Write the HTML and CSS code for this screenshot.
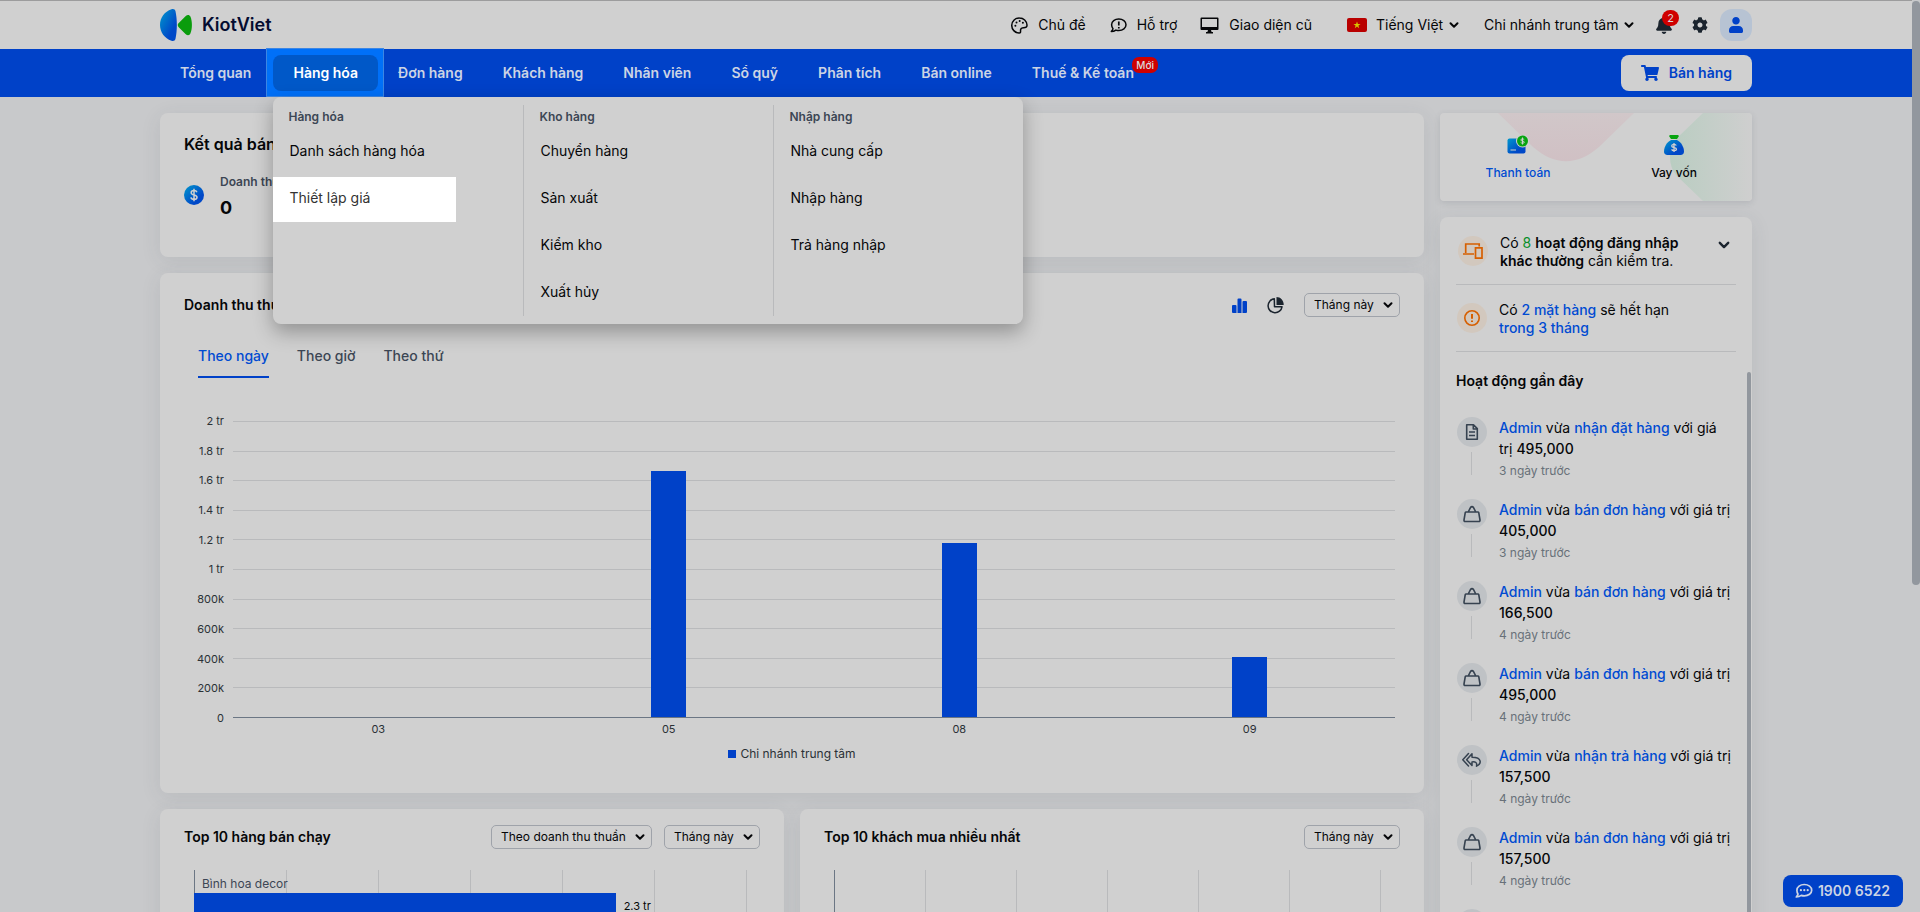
FILE: index.html
```html
<!DOCTYPE html>
<html lang="vi">
<head>
    <meta charset="UTF-8">
    <meta name="viewport" content="width=device-width, initial-scale=1.0">
    <title>KiotViet</title>
    <link rel="stylesheet" href="styles.css">
</head>
<body>
    <svg class="sprite" aria-hidden="true">
        <symbol id="i-chevron" viewBox="0 0 10 10"><path d="M1.5 3.2 5 6.7 8.500 3.200" fill="none" stroke="currentColor" stroke-width="2" stroke-linecap="round" stroke-linejoin="round"/></symbol>
        <symbol id="i-bag" viewBox="0 0 18 18"><path d="M3.200 7h11.600q.8 0 1 .8l1.200 7.200q.2 1.500-1.300 1.500H2.300Q.8 16.500 1 15l1.200-7.200q.2-.8 1-.8zM5.200 7 7.600 2.400q1.400-1.600 2.800 0L12.800 7" fill="none" stroke="currentColor" stroke-width="1.600" stroke-linejoin="round"/></symbol>
        <symbol id="i-doc" viewBox="0 0 18 18"><path d="M4.500 1.800h6l3.800 3.800v10.600H3.700V1.800zM10.300 2v4h4M6 9h6M6 12.500h6" fill="none" stroke="currentColor" stroke-width="1.600" stroke-linejoin="round"/></symbol>
        <symbol id="i-reply" viewBox="0 0 20 16"><path d="M6.500 1.500.8 7.800l5.700 6.200M10 1.800 4.600 7.800l5.400 5.700v-3.600c3.500-.4 5.300.6 4.500 4.300 5-2.500 6-8.900-4.500-9z" fill="none" stroke="currentColor" stroke-width="1.500" stroke-linejoin="round" stroke-linecap="round"/></symbol>
    </svg>

    <div class="app">
        <header class="topbar">
            <div class="container topbar-inner">
                <a class="logo" href="#">
                    <svg width="32" height="32" viewBox="0 0 32 32" aria-hidden="true">
                        <defs><linearGradient id="g-blue" x1="0" x2="1" y1="0" y2="1"><stop offset="0" stop-color="#0098cc"/><stop offset=".7" stop-color="#0048c8"/></linearGradient></defs>
                        <path d="M11.500.3C4.500 2.500 0 9 0 16s4.500 13.500 11.500 15.700c2 .6 3.500 0 4-2 1.800-8 1.800-19.400 0-27.400-.5-2-2-2.600-4-2z" fill="url(#g-blue)"/>
                        <path d="M18.500 14.200 25.500 7.200c2-1.900 4-1.600 4.900.4 2 4.500 2 12.500 0 16.900-.9 2-2.900 2.300-4.900.4l-7-7c-1-1-1-2.700 0-3.700z" fill="#0a9c0c"/>
                    </svg>
                    <span>KiotViet</span>
                </a>
                <div class="tools">
                    <a class="tool tool-theme" href="#">
                        <svg width="17" height="17" viewBox="0 0 17 17"><path d="M8.500 1A7.500 7.500 0 0 0 8 16c2.300.1 1.300-2.100 1.600-3.400.3-1.500 1.600-1.900 3-1.900 2.200 0 3.500-.7 3.400-2.700C15.700 4 12.600 1 8.500 1z" fill="none" stroke="currentColor" stroke-width="1.500"/><g fill="currentColor"><circle cx="4.400" cy="8.700" r="1"/><circle cx="5.500" cy="5.400" r="1"/><circle cx="8.700" cy="4.100" r="1"/><circle cx="11.900" cy="5.800" r="1"/></g></svg>
                        Chủ đề
                    </a>
                    <a class="tool tool-help" href="#">
                        <svg width="17" height="17" viewBox="0 0 17 17"><path d="M8.800 2c4 0 7.200 2.500 7.200 5.800s-3.200 5.800-7.200 5.800c-1 0-2-.2-2.900-.5-1.200.9-2.800 1.500-4.600 1.500.9-.9 1.500-1.900 1.700-3C2.100 10.500 1.600 9.200 1.600 7.800 1.600 4.500 4.800 2 8.800 2z" fill="none" stroke="currentColor" stroke-width="1.500" stroke-linejoin="round"/><path d="M8.800 4.400v4.200M8.800 10v1.500" stroke="currentColor" stroke-width="1.700"/></svg>
                        Hỗ trợ
                    </a>
                    <a class="tool tool-old" href="#">
                        <svg width="19" height="17" viewBox="0 0 19 17"><path d="M1.500.5h16a1 1 0 0 1 1 1v10.600a1 1 0 0 1-1 1h-16a1 1 0 0 1-1-1V1.500a1 1 0 0 1 1-1zM2 2v8h15V2zM8 13h3l.6 2H13v1.500H6V15h1.400z" fill="currentColor" fill-rule="evenodd"/></svg>
                        Giao diện cũ
                    </a>
                    <div class="tool tool-lang">
                        <svg width="20" height="14" viewBox="0 0 20 14"><rect width="20" height="14" rx="2" fill="#b90000"/><path d="m10 3.400.9 2.600h2.700l-2.200 1.600.8 2.600-2.200-1.600-2.200 1.600.8-2.600L6.400 6h2.700z" fill="#d8c400"/></svg>
                        <span class="pick pick-plain">
                            <select aria-label="Ngôn ngữ"><option>Tiếng Việt</option></select>
                            <svg><use href="#i-chevron"/></svg>
                        </span>
                    </div>
                    <span class="pick pick-plain tool-branch">
                        <select aria-label="Chi nhánh"><option>Chi nhánh trung tâm</option></select>
                        <svg><use href="#i-chevron"/></svg>
                    </span>
                    <button class="icon-btn bell" aria-label="Thông báo">
                        <svg width="16" height="18" viewBox="0 0 448 512"><path fill="currentColor" d="M224 512c35.320 0 63.970-28.650 63.970-64H160.030c0 35.350 28.650 64 63.970 64zm215.390-149.710c-19.320-20.760-55.470-51.990-55.470-154.290 0-77.700-54.480-139.900-127.940-155.160V32c0-17.670-14.320-32-31.980-32s-31.980 14.330-31.980 32v20.840C118.560 68.100 64.080 130.300 64.080 208c0 102.300-36.150 133.530-55.470 154.290-6 6.450-8.660 14.160-8.610 21.710.11 16.400 12.980 32 32.100 32h383.800c19.120 0 32-15.600 32.100-32 .05-7.550-2.610-15.270-8.610-21.710z"/></svg>
                        <span class="count">2</span>
                    </button>
                    <button class="icon-btn gear" aria-label="Thiết lập">
                        <svg width="16" height="16" viewBox="0 0 512 512"><path fill="currentColor" d="M487.400 315.700l-42.600-24.600c4.300-23.200 4.300-47 0-70.200l42.600-24.600c4.900-2.800 7.100-8.600 5.500-14-11.100-35.600-30-67.800-54.700-94.600-3.800-4.100-10-5.100-14.800-2.300L380.800 110c-17.900-15.400-38.500-27.300-60.800-35.100V25.800c0-5.600-3.900-10.500-9.400-11.700-36.700-8.200-74.300-7.800-109.200 0-5.500 1.200-9.400 6.100-9.400 11.700V75c-22.200 7.900-42.800 19.800-60.800 35.100L88.700 85.500c-4.900-2.800-11-1.900-14.800 2.300-24.700 26.700-43.600 58.900-54.700 94.600-1.700 5.400.6 11.200 5.500 14L67.300 221c-4.300 23.200-4.300 47 0 70.200l-42.600 24.600c-4.900 2.800-7.100 8.600-5.500 14 11.100 35.600 30 67.800 54.700 94.600 3.800 4.100 10 5.100 14.800 2.300l42.600-24.600c17.900 15.400 38.500 27.300 60.800 35.100v49.200c0 5.600 3.900 10.500 9.400 11.700 36.700 8.200 74.300 7.800 109.200 0 5.500-1.200 9.400-6.100 9.400-11.700v-49.200c22.200-7.900 42.800-19.800 60.800-35.100l42.600 24.600c4.900 2.800 11 1.900 14.800-2.300 24.700-26.700 43.600-58.900 54.700-94.600 1.500-5.500-.7-11.300-5.600-14.100zM256 336c-44.100 0-80-35.900-80-80s35.900-80 80-80 80 35.900 80 80-35.900 80-80 80z"/></svg>
                    </button>
                    <button class="avatar" aria-label="Tài khoản">
                        <svg width="14" height="16" viewBox="0 0 448 512"><path fill="currentColor" d="M224 240c66 0 120-54 120-120S290 0 224 0 104 54 104 120s54 120 120 120zm90 48H134C60 288 0 348 0 422v42c0 26 22 48 48 48h352c26 0 48-22 48-48v-42c0-74-60-134-134-134z"/></svg>
                    </button>
                </div>
            </div>
        </header>

        <nav class="navbar">
            <div class="container navbar-inner">
                <ul class="nav">
                    <li><a href="#">Tổng quan</a></li>
                    <li class="open">
                        <a href="#">Hàng hóa</a>
                        <div class="mega">
                            <div class="mega-col">
                                <h3>Hàng hóa</h3>
                                <a href="#">Danh sách hàng hóa</a>
                                <a class="spot" href="#">Thiết lập giá</a>
                            </div>
                            <div class="mega-col">
                                <h3>Kho hàng</h3>
                                <a href="#">Chuyển hàng</a>
                                <a href="#">Sản xuất</a>
                                <a href="#">Kiểm kho</a>
                                <a href="#">Xuất hủy</a>
                            </div>
                            <div class="mega-col">
                                <h3>Nhập hàng</h3>
                                <a href="#">Nhà cung cấp</a>
                                <a href="#">Nhập hàng</a>
                                <a href="#">Trả hàng nhập</a>
                            </div>
                        </div>
                    </li>
                    <li><a href="#">Đơn hàng</a></li>
                    <li><a href="#">Khách hàng</a></li>
                    <li><a href="#">Nhân viên</a></li>
                    <li><a href="#">Sổ quỹ</a></li>
                    <li><a href="#">Phân tích</a></li>
                    <li><a href="#">Bán online</a></li>
                    <li><a href="#">Thuế &amp; Kế toán</a><span class="new">Mới</span></li>
                </ul>
                <button class="sell">
                    <svg width="18" height="16" viewBox="0 0 576 512"><path fill="currentColor" d="M528.120 301.319l47.273-208C578.806 78.301 567.391 64 551.990 64H159.208l-9.166-44.810C147.758 8.021 137.930 0 126.529 0H24C10.745 0 0 10.745 0 24v16c0 13.255 10.745 24 24 24h69.883l70.248 343.435C147.325 417.100 136 435.222 136 456c0 30.928 25.072 56 56 56s56-25.072 56-56c0-15.674-6.447-29.835-16.824-40h209.647C430.447 426.165 424 440.326 424 456c0 30.928 25.072 56 56 56s56-25.072 56-56c0-22.172-12.888-41.332-31.579-50.405l5.517-24.276c3.413-15.018-8.002-29.319-23.403-29.319H218.117l-6.545-32h293.145c11.206 0 20.920-7.754 23.403-18.681z"/></svg>
                    Bán hàng
                </button>
            </div>
        </nav>

        <main class="container page">
            <div class="main-col">
                <section class="card result">
                    <h2>Kết quả bán hàng hôm nay</h2>
                    <div class="result-row">
                        <svg width="20" height="20" viewBox="0 0 20 20" aria-hidden="true"><circle cx="10" cy="10" r="10" fill="url(#g-blue)"/><path d="M10 3.800v12.400M12.900 7.300c-.4-1.200-1.500-1.700-2.900-1.700-1.600 0-2.800.7-2.800 2.100 0 3.200 5.800 1.300 5.800 4.500 0 1.500-1.300 2.200-3 2.200-1.600 0-2.800-.7-3.100-2" fill="none" stroke="#d0d0d0" stroke-width="1.500"/></svg>
                        <div>
                            <div class="result-label">Doanh thu</div>
                            <div class="result-value">0</div>
                        </div>
                    </div>
                </section>

                <section class="card revenue">
                    <div class="card-head">
                        <h2>Doanh thu thuần</h2>
                        <div class="card-tools">
                            <button class="icon-btn blue" aria-label="Biểu đồ cột"><svg width="15" height="15" viewBox="0 0 15 15"><path d="M0 8q0-1 1-1h2.500q1 0 1 1v7H1q-1 0-1-1zM5.500 1.500q0-1 1-1h2q1 0 1 1V15h-4zM10.500 4q0-1 1-1H14q1 0 1 1v10q0 1-1 1h-3.500z" fill="currentColor"/></svg></button>
                            <button class="icon-btn" aria-label="Biểu đồ tròn"><svg width="17" height="17" viewBox="0 0 17 17"><path d="M9.500 0C13.500 0 16.700 3.300 16.700 8H9.500z" fill="currentColor"/><path d="M7.300 1.800A7 7 0 1 0 15 9.800H7.500z" fill="none" stroke="currentColor" stroke-width="1.500" stroke-linejoin="round"/></svg></button>
                            <span class="pick">
                                <select aria-label="Thời gian doanh thu"><option>Tháng này</option></select>
                                <svg><use href="#i-chevron"/></svg>
                            </span>
                        </div>
                    </div>
                    <div class="tabs" role="tablist">
                        <button class="active" role="tab" aria-selected="true">Theo ngày</button>
                        <button role="tab">Theo giờ</button>
                        <button role="tab">Theo thứ</button>
                    </div>
                    <div class="chart">
                        <div class="y-axis">
                            <span>2 tr</span><span>1.8 tr</span><span>1.6 tr</span><span>1.4 tr</span><span>1.2 tr</span><span>1 tr</span><span>800k</span><span>600k</span><span>400k</span><span>200k</span><span>0</span>
                        </div>
                        <div class="plot">
                            <div class="lines"><i></i><i></i><i></i><i></i><i></i><i></i><i></i><i></i><i></i><i></i></div>
                            <div class="bars">
                                <div></div>
                                <div><b style="height: 83.1%"></b></div>
                                <div><b style="height: 58.8%"></b></div>
                                <div><b style="height: 20.3%"></b></div>
                            </div>
                        </div>
                        <div class="x-axis"><span>03</span><span>05</span><span>08</span><span>09</span></div>
                    </div>
                    <div class="legend">Chi nhánh trung tâm</div>
                </section>

                <div class="split">
                    <section class="card top">
                        <div class="card-head">
                            <h2>Top 10 hàng bán chạy</h2>
                            <div class="card-tools tight">
                                <span class="pick">
                                    <select aria-label="Xếp theo"><option>Theo doanh thu thuần</option></select>
                                    <svg><use href="#i-chevron"/></svg>
                                </span>
                                <span class="pick">
                                    <select aria-label="Thời gian hàng bán"><option>Tháng này</option></select>
                                    <svg><use href="#i-chevron"/></svg>
                                </span>
                            </div>
                        </div>
                        <div class="hchart">
                            <div class="cols"><i></i><i></i><i></i><i></i><i></i><i></i><i></i></div>
                            <div class="hbars">
                                <div class="hlabel">Bình hoa decor</div>
                                <div class="hrow"><b style="width: 73.2%"></b><span>2.3 tr</span></div>
                            </div>
                        </div>
                    </section>
                    <section class="card top">
                        <div class="card-head">
                            <h2>Top 10 khách mua nhiều nhất</h2>
                            <div class="card-tools">
                                <span class="pick">
                                    <select aria-label="Thời gian khách mua"><option>Tháng này</option></select>
                                    <svg><use href="#i-chevron"/></svg>
                                </span>
                            </div>
                        </div>
                        <div class="hchart">
                            <div class="cols cols-narrow"><i></i><i></i><i></i><i></i><i></i><i></i><i></i></div>
                        </div>
                    </section>
                </div>
            </div>

            <aside class="side-col">
                <section class="card finance">
                    <svg class="finance-bg" viewBox="0 0 312 88" preserveAspectRatio="none" aria-hidden="true">
                        <defs>
                            <linearGradient id="g-pink" x1="0" x2="0" y1="0" y2="1"><stop offset="0" stop-color="#d1c7c9"/><stop offset="1" stop-color="#d0c0c4"/></linearGradient>
                            <linearGradient id="g-mint"><stop offset="0" stop-color="#b9cdc1"/><stop offset="1" stop-color="#cfcfcf"/></linearGradient>
                        </defs>
                        <path d="M58 0 93 34c22 19 44 19 66 0L194 0z" fill="url(#g-pink)"/>
                        <path d="M263 0 236 26c-8 9-8 27 0 36l27 26h49V0z" fill="url(#g-mint)"/>
                    </svg>
                    <a class="blue" href="#">
                        <svg width="22" height="20" viewBox="0 0 22 20"><path d="M2.500 3.500H17q1.500 0 1.500 1.500v11.500q0 2-2 2h-14q-2 0-2-2v-11q0-2 2-2z" fill="url(#g-blue)"/><circle cx="15.500" cy="6" r="6.500" fill="#d0d0d0"/><circle cx="15.500" cy="6" r="5.500" fill="#08a410"/><path d="M15.500 2.500v7M17.200 4.600c-1-1.200-3.400-.8-3.400.4 0 1.500 3.500.6 3.500 2.200 0 1.200-2.700 1.500-3.600.2" fill="none" stroke="#d0d0d0"/><path d="M3.500 15h5.500" stroke="#d0d0d0"/></svg>
                        Thanh toán
                    </a>
                    <a href="#">
                        <svg width="20" height="20" viewBox="0 0 20 20"><path d="M6 0h8l1 1-2 3H7L5 1z" fill="#08a410"/><path d="M7 5h6c4 2 7 7 7 11.500 0 2.300-1.200 3.500-3.500 3.500h-13C1.200 20 0 18.800 0 16.500 0 12 3 7 7 5z" fill="url(#g-blue)"/><path d="M10 8v9M12.300 10.500c-1-1.800-4.600-1.400-4.600.5 0 2.300 4.800 1 4.800 3.200 0 1.900-3.900 2.100-4.900.2" fill="none" stroke="#d0d0d0" stroke-width="1.300"/></svg>
                        Vay vốn
                    </a>
                </section>

                <section class="card feed">
                    <div class="notice">
                        <span class="dot orange"><svg width="20" height="16" viewBox="0 0 20 16"><path d="M2.700 10V1h13.500v2.500M0 11h11M12.500 4.800h6.500v10.400h-6.500z" fill="none" stroke="currentColor" stroke-width="1.700"/></svg></span>
                        <p>Có <em class="green">8</em> <strong>hoạt động đăng nhập khác thường</strong> cần kiểm tra.</p>
                        <button class="icon-btn more" aria-label="Mở rộng"><svg width="12" height="12"><use href="#i-chevron"/></svg></button>
                    </div>
                    <div class="notice">
                        <span class="dot orange"><svg width="16" height="16" viewBox="0 0 16 16"><circle cx="8" cy="8" r="7.200" fill="none" stroke="currentColor" stroke-width="1.600"/><path d="M8 4v4.800M8 10.400V12" stroke="currentColor" stroke-width="2"/></svg></span>
                        <p>Có <a href="#">2 mặt hàng</a> sẽ hết hạn <a href="#">trong 3 tháng</a></p>
                    </div>
                    <h2>Hoạt động gần đây</h2>
                    <ul class="log">
                        <li>
                            <span class="dot"><svg width="18" height="18"><use href="#i-doc"/></svg></span>
                            <p><a href="#">Admin</a> vừa <a href="#">nhận đặt hàng</a> với giá trị <strong>495,000</strong></p>
                            <time>3 ngày trước</time>
                        </li>
                        <li>
                            <span class="dot"><svg width="18" height="18"><use href="#i-bag"/></svg></span>
                            <p><a href="#">Admin</a> vừa <a href="#">bán đơn hàng</a> với giá trị <strong>405,000</strong></p>
                            <time>3 ngày trước</time>
                        </li>
                        <li>
                            <span class="dot"><svg width="18" height="18"><use href="#i-bag"/></svg></span>
                            <p><a href="#">Admin</a> vừa <a href="#">bán đơn hàng</a> với giá trị <strong>166,500</strong></p>
                            <time>4 ngày trước</time>
                        </li>
                        <li>
                            <span class="dot"><svg width="18" height="18"><use href="#i-bag"/></svg></span>
                            <p><a href="#">Admin</a> vừa <a href="#">bán đơn hàng</a> với giá trị <strong>495,000</strong></p>
                            <time>4 ngày trước</time>
                        </li>
                        <li>
                            <span class="dot"><svg width="20" height="16"><use href="#i-reply"/></svg></span>
                            <p><a href="#">Admin</a> vừa <a href="#">nhận trả hàng</a> với giá trị <strong>157,500</strong></p>
                            <time>4 ngày trước</time>
                        </li>
                        <li>
                            <span class="dot"><svg width="18" height="18"><use href="#i-bag"/></svg></span>
                            <p><a href="#">Admin</a> vừa <a href="#">bán đơn hàng</a> với giá trị <strong>157,500</strong></p>
                            <time>4 ngày trước</time>
                        </li>
                        <li>
                            <span class="dot"><svg width="18" height="18"><use href="#i-bag"/></svg></span>
                        </li>
                    </ul>
                </section>
            </aside>
        </main>
    </div>

    <div class="page-scroll"></div>
    <a class="hotline" href="tel:19006522">
        <svg width="18" height="16" viewBox="0 0 18 16"><path d="M9.300 1.500c4.100 0 7.400 2.500 7.400 5.700s-3.300 5.700-7.400 5.700c-1.100 0-2.100-.2-3-.5-1.200.9-2.900 1.600-5 1.600.9-1 1.500-2 1.700-3C2.300 10 1.900 8.600 1.900 7.200c0-3.200 3.300-5.700 7.400-5.700z" fill="none" stroke="currentColor" stroke-width="1.700" stroke-linejoin="round"/><g fill="currentColor"><circle cx="5.900" cy="7.200" r="1.100"/><circle cx="9.300" cy="7.200" r="1.100"/><circle cx="12.700" cy="7.200" r="1.100"/></g></svg>
        1900 6522
    </a>
</body>
</html>
```
FILE: styles.css
```css
:root {
    --bg: #c8c9cb;
    --card: #d0d0d0;
    --blue: #0041c8;
    --link: #004bd2;
    --text: #050608;
    --muted: #3c4654;
    --line: #b9babc;
    --border: #9fa3aa;
    --thumb: #92979e;
}

* {
    box-sizing: border-box;
}

body {
    margin: 0;
    height: 100vh;
    overflow: hidden;
    background: var(--bg);
    color: var(--text);
    font: 14px/20px Inter, "Noto Sans", sans-serif;
}

h2, h3, p, ul {
    margin: 0;
    padding: 0;
}

ul {
    list-style: none;
}

a {
    color: inherit;
    text-decoration: none;
}

button, select {
    font: inherit;
    color: inherit;
    background: none;
    border: 0;
    padding: 0;
    cursor: pointer;
}

svg {
    display: block;
    flex: none;
}

.sprite {
    position: absolute;
    width: 0;
    height: 0;
}

.app {
    height: 100%;
    margin-right: 8px;
    overflow: hidden;
    border-top: 1px solid #9c9c9d;
}

.container {
    max-width: 1592px;
    margin: 0 auto;
}

/* header */
.topbar {
    background: var(--card);
}

.topbar-inner {
    display: flex;
    align-items: center;
    justify-content: space-between;
    height: 48px;
}

.logo {
    display: flex;
    align-items: center;
    gap: 10px;
    color: #040c30;
    font-size: 18px;
    font-weight: 600;
}

.tools, .tool {
    display: flex;
    align-items: center;
}

.tool {
    gap: 10px;
}

.tool-help {
    margin-left: 24px;
}

.tool-old {
    margin-left: 23px;
}

.tool-lang {
    gap: 9px;
    margin-left: 35px;
}

.tool-branch {
    margin-left: 25px;
}

.icon-btn {
    display: flex;
    color: #1b242e;
}

.bell {
    position: relative;
    margin-left: 22px;
}

.gear {
    margin-left: 20px;
}

.count {
    position: absolute;
    left: 6px;
    top: -6px;
    width: 17px;
    height: 16px;
    border-radius: 8px;
    background: #cf0000;
    color: #d8d8d8;
    font-size: 11px;
    line-height: 16px;
    text-align: center;
}

.avatar {
    display: flex;
    align-items: center;
    justify-content: center;
    width: 32px;
    height: 32px;
    margin-left: 12px;
    border-radius: 12px;
    background: #b7c3d3;
    color: var(--blue);
}

/* selects */
.pick {
    display: inline-grid;
    align-items: center;
}

.pick select {
    grid-area: 1 / 1;
    appearance: none;
    height: 24px;
    padding: 0 25px 0 9px;
    border: 1px solid var(--border);
    border-radius: 5px;
    font-size: 12px;
}

.pick svg {
    grid-area: 1 / 1;
    justify-self: end;
    width: 10px;
    height: 10px;
    margin-right: 7px;
    pointer-events: none;
}

.pick.pick-plain select {
    padding: 0 15px 0 0;
    border: 0;
    font-size: 14px;
}

.pick.pick-plain svg {
    margin-right: 0;
}

/* navigation */
.navbar {
    background: var(--blue);
}

.navbar-inner {
    display: flex;
    align-items: center;
    justify-content: space-between;
    height: 48px;
}

.nav {
    display: flex;
}

.nav > li {
    position: relative;
}

.nav > li:first-child {
    margin-right: 2px;
}

.nav > li > a {
    display: block;
    position: relative;
    padding: 8px 20px;
    border-radius: 8px;
    color: #ccd4e4;
    font-weight: 600;
}

.nav > .open > a {
    background: #0058c8;
    color: #fff;
}

.nav > .open::before {
    content: "";
    position: absolute;
    inset: -7px -6px -6px -7px;
    background: #0070f8;
    border: 1px solid #3c86e4;
}

.new {
    position: absolute;
    right: -4px;
    top: 2px;
    padding: 0 4px;
    border-radius: 7px;
    background: #cf0000;
    color: #dcdcdc;
    font-size: 10px;
    font-weight: 500;
    line-height: 16px;
}

.sell {
    display: flex;
    align-items: center;
    gap: 10px;
    height: 36px;
    padding: 0 20px;
    border-radius: 8px;
    background: var(--card);
    color: var(--blue);
    font-weight: 600;
}

.mega {
    position: absolute;
    left: 0;
    top: 42px;
    z-index: 5;
    display: grid;
    grid-template-columns: repeat(3, 250px);
    padding: 8px 0;
    border-radius: 8px;
    background: var(--card);
    box-shadow: 0 8px 20px rgba(0, 0, 0, 0.3);
}

.mega-col + .mega-col {
    border-left: 1px solid var(--line);
}

.mega-col h3 {
    padding: 2px 15px 3px;
    color: var(--muted);
    font-size: 12px;
    font-weight: 600;
}

.mega-col a {
    display: block;
    width: 183px;
    margin-bottom: 2px;
    padding: 11px 16px 14px;
}

.mega-col a:last-child {
    margin-bottom: 0;
}

.mega-col .spot {
    background: #fff;
    color: #333;
}

/* layout */
.page {
    display: grid;
    grid-template-columns: minmax(0, 1fr) 312px;
    gap: 16px;
    padding-top: 16px;
}

.main-col, .side-col {
    display: flex;
    flex-direction: column;
    gap: 16px;
}

.card {
    border-radius: 8px;
    background: var(--card);
    box-shadow: 0 4px 20px rgba(60, 66, 80, 0.1);
}

.card h2 {
    font-size: 14px;
    font-weight: 600;
}

.result {
    min-height: 144px;
    padding: 20px 24px;
}

.card.result h2 {
    font-size: 16px;
    line-height: 22px;
}

.result-row {
    display: flex;
    align-items: center;
    gap: 16px;
    padding-top: 17px;
}

.result-row svg {
    margin-bottom: 6px;
}

.result-label {
    color: var(--muted);
    font-size: 12px;
    font-weight: 600;
}

.result-value {
    font-size: 18px;
    font-weight: 700;
    line-height: 32px;
}

.revenue {
    padding-bottom: 29px;
}

.card-head {
    display: flex;
    align-items: center;
    justify-content: space-between;
    padding: 16px 24px 0;
}

.revenue .card-head {
    padding-top: 20px;
}

.card-tools {
    display: flex;
    align-items: center;
    gap: 20px;
}

.card-tools.tight {
    gap: 12px;
}

.icon-btn.blue {
    color: var(--blue);
}

.tabs {
    display: flex;
    gap: 28px;
    padding: 26px 38px 0;
}

.tabs button {
    padding: 3px 0 10px;
    border-bottom: 2px solid transparent;
    color: var(--muted);
    font-weight: 500;
}

.tabs .active {
    border-color: var(--blue);
    color: var(--link);
}

.chart {
    display: grid;
    grid-template-columns: 40px 1fr;
    column-gap: 9px;
    padding: 35px 29px 0 24px;
    color: #2b3036;
    font-size: 11px;
    line-height: 16px;
}

.y-axis {
    display: flex;
    flex-direction: column;
    justify-content: space-between;
    text-align: right;
}

.plot {
    display: grid;
    height: 297px;
    margin: 8px 0;
    border-bottom: 1px solid #6b7684;
}

.lines, .bars {
    grid-area: 1 / 1;
    display: flex;
}

.lines {
    flex-direction: column;
}

.lines i {
    flex: 1;
    border-top: 1px solid var(--line);
}

.bars div {
    flex: 1;
    display: flex;
    align-items: flex-end;
    justify-content: center;
}

.bars b {
    width: 35px;
    background: var(--blue);
}

.x-axis {
    grid-column: 2;
    display: flex;
    margin-top: -5px;
    text-align: center;
}

.x-axis span {
    flex: 1;
}

.legend {
    display: flex;
    align-items: center;
    justify-content: center;
    gap: 4px;
    padding-top: 7px;
    color: #2b3036;
    font-size: 12px;
}

.legend::before {
    content: "";
    width: 8px;
    height: 8px;
    background: var(--blue);
}

.split {
    display: grid;
    grid-template-columns: 1fr 1fr;
    gap: 16px;
}

.top {
    height: 480px;
}

.hchart {
    display: grid;
    margin: 21px 14px 0 34px;
    height: 380px;
}

.cols, .hbars {
    grid-area: 1 / 1;
}

.cols {
    display: grid;
    grid-template-columns: repeat(6, 92px) 1fr;
}

.cols-narrow {
    grid-template-columns: repeat(6, 91px) 1fr;
}

.cols i {
    border-left: 1px solid var(--line);
}

.cols i:first-child {
    border-color: #6b7684;
}

.hlabel {
    padding: 4px 8px 0;
    height: 23px;
    color: var(--muted);
    font-size: 12px;
}

.hrow {
    display: flex;
    gap: 8px;
    font-size: 11px;
    line-height: 26px;
}

.hrow b {
    height: 26px;
    background: var(--blue);
}

/* right column */
.finance {
    position: relative;
    display: grid;
    grid-template-columns: 1fr 1fr;
    padding: 22px 0 18px;
    border-radius: 4px;
    overflow: hidden;
    box-shadow: 0 2px 6px rgba(60, 66, 80, 0.15);
    font-size: 12px;
    font-weight: 500;
}

.finance-bg {
    position: absolute;
    inset: 0;
    width: 100%;
    height: 100%;
}

.finance a {
    position: relative;
    display: flex;
    flex-direction: column;
    align-items: center;
    gap: 8px;
}

.blue, .feed a {
    color: var(--link);
}

.feed {
    position: relative;
    padding: 0 16px;
    min-height: 760px;
}

/* thin scroll thumb of the feed */
.feed::after {
    content: "";
    position: absolute;
    right: 1px;
    top: 155px;
    bottom: 0;
    width: 4px;
    border-radius: 2px;
    background: var(--thumb);
}

.feed a {
    font-weight: 500;
}

.feed strong {
    font-weight: 600;
}

.notice {
    display: flex;
    gap: 12px;
    padding: 16px 0 14px 2px;
    border-bottom: 1px solid var(--line);
    line-height: 18px;
}

.notice + .notice {
    padding: 15px 0 14px 1px;
}

.notice p {
    width: 190px;
    margin-top: 1px;
}

.notice .dot {
    margin-top: 3px;
}

.green {
    color: #0a8f2a;
    font-style: normal;
}

.more {
    align-self: flex-start;
    margin: 6px 6px 0 auto;
}

.dot {
    display: flex;
    flex: none;
    align-items: center;
    justify-content: center;
    width: 30px;
    height: 30px;
    border-radius: 50%;
    background: #bfc2c5;
    color: #364250;
}

.dot.orange {
    background: #d2c8be;
    color: #d65f00;
}

.card.feed h2 {
    padding: 19px 0 26px;
}

.log {
    padding-right: 2px;
}

.log li {
    display: grid;
    grid-template-columns: 31px 1fr;
    grid-template-rows: 35px auto;
    column-gap: 12px;
    height: 82px;
}

.log .dot {
    grid-area: 1 / 1;
    justify-self: end;
}

.log li::before {
    content: "";
    grid-area: 2 / 1;
    justify-self: center;
    width: 1px;
    height: 23px;
    background: var(--line);
}

.log p {
    grid-area: 1 / 2 / 3 / 3;
    line-height: 21px;
}

.log strong {
    font-weight: 500;
}

.log time {
    grid-area: 2 / 2;
    align-self: end;
    padding-bottom: 18px;
    color: #687079;
    font-size: 12px;
}

.hotline {
    position: fixed;
    right: 17px;
    bottom: 5px;
    display: flex;
    align-items: center;
    gap: 5px;
    height: 32px;
    padding: 0 13px 0 12px;
    border-radius: 8px;
    background: var(--blue);
    color: #ccd4e4;
    font-weight: 600;
}

.page-scroll {
    position: fixed;
    right: 0;
    top: 1px;
    width: 8px;
    height: 64%;
    border-radius: 4px;
    background: var(--thumb);
}
```
